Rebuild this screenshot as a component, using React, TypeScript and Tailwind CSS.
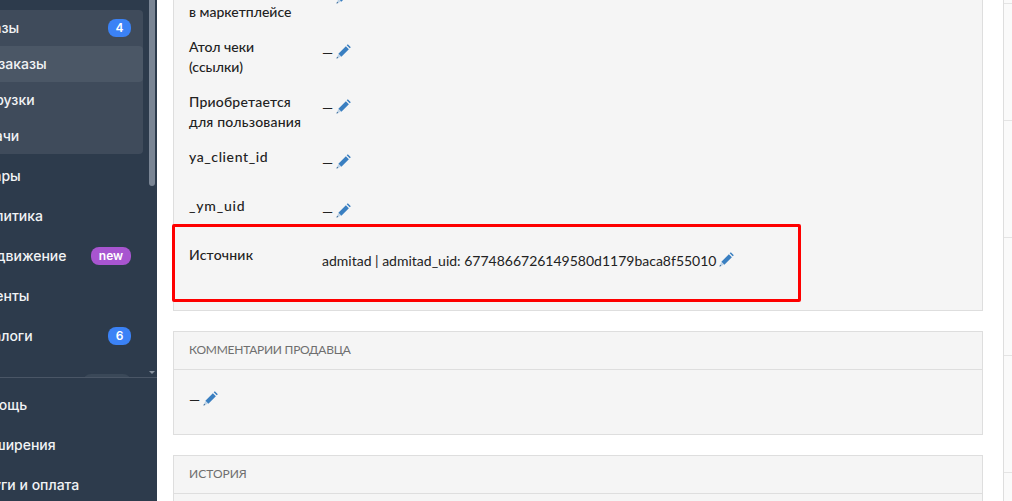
function Pencil({ className = '' }: { className?: string }) {
    return (
        <svg width="15" height="15" viewBox="0 0 14 14" className={`inline-block shrink-0 ${className}`}>
            <polygon points="2.2,9 9.2,2 12,4.8 5,11.8" fill="#3a7fc1" />
            <polygon points="10,1.2 11,0.2 13.8,3 12.8,4" fill="#3a7fc1" />
            <polygon points="2.2,9.4 4.6,11.8 0.4,13.6" fill="#bcd2e6" />
            <polygon points="0.4,13.6 1,11.8 2.2,13" fill="#2b5f92" />
        </svg>
    )
}

function Badge({ children, color = 'bg-[#3b82f6]', width = 'w-[23px]' }: { children: string; color?: string; width?: string }) {
    return (
        <span className={`${color} ${width} flex h-[18px] items-center justify-center rounded-lg text-[12px] font-semibold text-white`}>
            {children}
        </span>
    )
}

function NavItem({ label, badge, height = 'h-10', right = 'pr-[26px]' }: { label: string; badge?: React.ReactNode; height?: string; right?: string }) {
    return (
        <div className={`flex items-center justify-between ${height} ${right}`}>
            <span className="-ml-[31px] whitespace-nowrap">{label}</span>
            {badge}
        </div>
    )
}

function Sidebar() {
    return (
        <aside className="flex h-full w-[157px] shrink-0 flex-col overflow-hidden bg-[#2d3b4c] font-['Inter',sans-serif] text-[14px] font-medium text-[#f1f3f5]">
            <div className="relative h-[378px] shrink-0 overflow-hidden border-b border-[#4a5666] pt-[10px]">
                <div className="mr-[14px] rounded-r bg-[#3f4b5b]">
                    <NavItem label="Заказы" height="h-9" right="pr-3" badge={<Badge>4</Badge>} />
                    <div className="rounded-r bg-[#4b5766]">
                        <NavItem label="Все заказы" height="h-9" right="pr-3" />
                    </div>
                    <NavItem label="Выгрузки" height="h-9" right="pr-3" />
                    <NavItem label="Задачи" height="h-9" right="pr-3" />
                </div>
                <div className="mt-[2px]">
                    <NavItem label="Товары" />
                    <NavItem label="Аналитика" />
                    <NavItem label="Продвижение" badge={<Badge color="bg-[#a855d0]" width="w-10">new</Badge>} />
                    <NavItem label="Клиенты" />
                    <NavItem label="Каталоги" badge={<Badge>6</Badge>} />
                </div>
                <div className="mr-[26px] mt-[18px] ml-auto h-[18px] w-12 rounded-lg bg-[#3a4858]" />
                {/* scrollbar */}
                <div className="absolute right-[2px] top-0 h-[186px] w-[6px] rounded-b bg-[#7a8594]" />
                <div className="absolute right-[2px] top-[371px] h-0 w-0 border-x-[3px] border-t-[3px] border-x-transparent border-t-[#8a94a0]" />
            </div>
            <div className="pt-[7px]">
                <NavItem label="Помощь" />
                <NavItem label="Расширения" />
                <NavItem label="Услуги и оплата" />
            </div>
        </aside>
    )
}

function Field({ label, value = '—', height, tracking = '' }: { label: string; value?: string; height: string; tracking?: string }) {
    return (
        <div className={`flex ${height}`}>
            <div className={`w-[133px] shrink-0 whitespace-pre-line pr-3 font-medium text-[#222] ${tracking}`}>{label}</div>
            <div className="flex items-start gap-[3px] pt-[6px] text-[#222]">
                <span className="whitespace-nowrap">{value}</span>
                <Pencil className="mt-[1px]" />
            </div>
        </div>
    )
}

function Panel({ title, tracking = '', children }: { title: string; tracking?: string; children?: React.ReactNode }) {
    return (
        <section className="mb-5 border border-[#dedede] bg-[#f5f5f5]">
            <h3 className={`flex h-[38px] items-center border-b border-[#dedede] px-[15px] pb-[2px] text-[12px] uppercase text-[#6f6f6f] ${tracking}`}>{title}</h3>
            {children}
        </section>
    )
}

export default function App() {
    return (
        <div className="flex h-[501px] w-[1012px] overflow-hidden bg-white font-['Lato',sans-serif] text-[14px] leading-5">
            <Sidebar />
            <main className="ml-4 w-[810px] shrink-0 -mt-[30px]">
                <section className="relative mb-5 h-[341px] border border-[#dedede] bg-[#f5f5f5] pl-[15px] pt-[11px]">
                    <Field label={'Размещение\nв маркетплейсе'} height="h-[55px]" />
                    <Field label="Атол чеки (ссылки)" height="h-[55px]" />
                    <Field label="Приобретается для пользования" height="h-[55px]" tracking="tracking-[0.2px]" />
                    <Field label="ya_client_id" height="h-[49px]" tracking="tracking-[0.6px]" />
                    <Field label="_ym_uid" height="h-[49px]" tracking="tracking-[0.8px]" />
                    <Field label="Источник" value="admitad | admitad_uid: 6774866726149580d1179baca8f55010" height="h-[49px]" tracking="tracking-[0.2px]" />
                    {/* red annotation */}
                    <div className="absolute left-[-2px] top-[253px] h-[78px] w-[629px] rounded-[2px] border-[3px] border-[#fe0000]" />
                </section>
                <Panel title="Комментарии продавца" tracking="tracking-[-0.25px]">
                    <div className="h-[64px] px-[15px] pt-[20px] text-[#222]">
                        <div className="flex items-start gap-[3px]">
                            <span>—</span>
                            <Pencil className="mt-[1px]" />
                        </div>
                    </div>
                </Panel>
                <Panel title="История">
                    <div className="h-10" />
                </Panel>
            </main>
            <aside className="ml-5 flex flex-1 flex-col border-l border-[#dedede] bg-[#fafafa]">
                <div className="h-1 shrink-0 border-b border-[#e4e4e4]" />
                <div className="h-[117px] shrink-0 border-b border-[#e4e4e4]" />
                <div className="h-[117px] shrink-0 border-b border-[#e4e4e4]" />
                <div className="h-[118px] shrink-0 border-b border-[#e4e4e4]" />
                <div className="h-[117px] shrink-0 border-b border-[#e4e4e4]" />
            </aside>
        </div>
    )
}
